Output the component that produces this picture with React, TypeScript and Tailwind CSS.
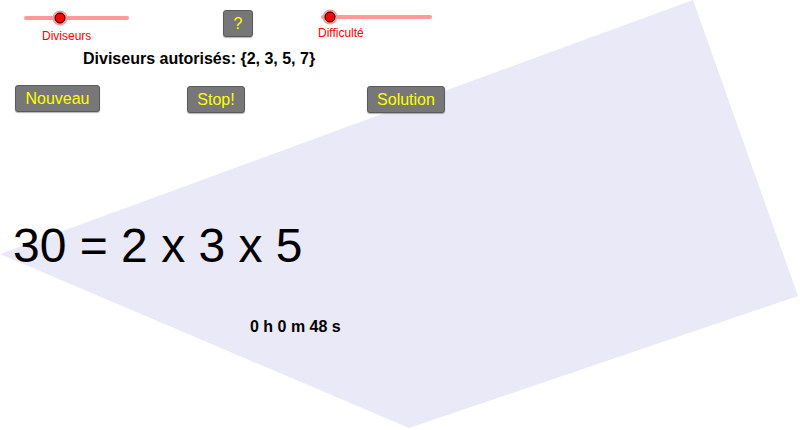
import React from 'react';

// GeoGebra-style applet: free canvas with sliders, buttons and texts placed on it

const font = { fontFamily: '"Liberation Sans", Arial, sans-serif' };

const Slider: React.FC<{ x1: number; x2: number; y: number; knob: number }> = ({ x1, x2, y, knob }) => (
  <svg className="absolute left-0 top-0" width={800} height={430} style={{ pointerEvents: 'none' }}>
    <line x1={x1} y1={y} x2={x2} y2={y} stroke="#ff9999" strokeWidth={4} strokeLinecap="round" />
    <circle cx={knob} cy={y} r={7.5} fill="#ff9999" />
    <circle cx={knob} cy={y} r={5} fill="#ff0000" stroke="#000" strokeWidth={1} />
  </svg>
);

const GgbButton: React.FC<{ label: string; className: string }> = ({ label, className }) => (
  <button
    className={`absolute flex items-center justify-center rounded-[3px] border border-[#5a5a5a] bg-[#777777] text-[16px] leading-none text-[#ffff00] shadow-[0_1px_1px_rgba(0,0,0,0.3)] ${className}`}
  >
    {label}
  </button>
);

const App: React.FC = () => {
  return (
    <div className="relative h-[430px] w-[800px] overflow-hidden bg-white" style={font}>
      {/* Polygon on the canvas */}
      <svg className="absolute left-0 top-0" width={800} height={430}>
        <polygon points="0,254 693,0 798,296 409,428" fill="#e9e9f7" />
      </svg>

      {/* Sliders */}
      <Slider x1={26} x2={127} y={18} knob={60} />
      <div className="absolute left-[42px] top-[30px] text-[12px] leading-none text-[#ff0000]">Diviseurs</div>

      <Slider x1={323} x2={430} y={17} knob={330} />
      <div className="absolute left-[318px] top-[27px] text-[12px] leading-none text-[#ff0000]">Difficulté</div>

      <GgbButton label="?" className="left-[223px] top-[10px] h-[27px] w-[30px]" />

      <div className="absolute left-[83px] top-[51px] text-[16px] font-bold leading-none text-black">
        Diviseurs autorisés: {'{'}2, 3, 5, 7{'}'}
      </div>

      <GgbButton label="Nouveau" className="left-[15px] top-[85px] h-[27px] w-[85px]" />
      <GgbButton label="Stop!" className="left-[187px] top-[86px] h-[27px] w-[58px]" />
      <GgbButton label="Solution" className="left-[367px] top-[86px] h-[27px] w-[78px]" />

      <div className="absolute left-[13px] top-[222px] text-[48px] leading-none text-black">30 = 2 x 3 x 5</div>

      <div className="absolute left-[250px] top-[319px] text-[16px] font-bold leading-none text-black">0 h 0 m 48 s</div>
    </div>
  );
};

export default App;
